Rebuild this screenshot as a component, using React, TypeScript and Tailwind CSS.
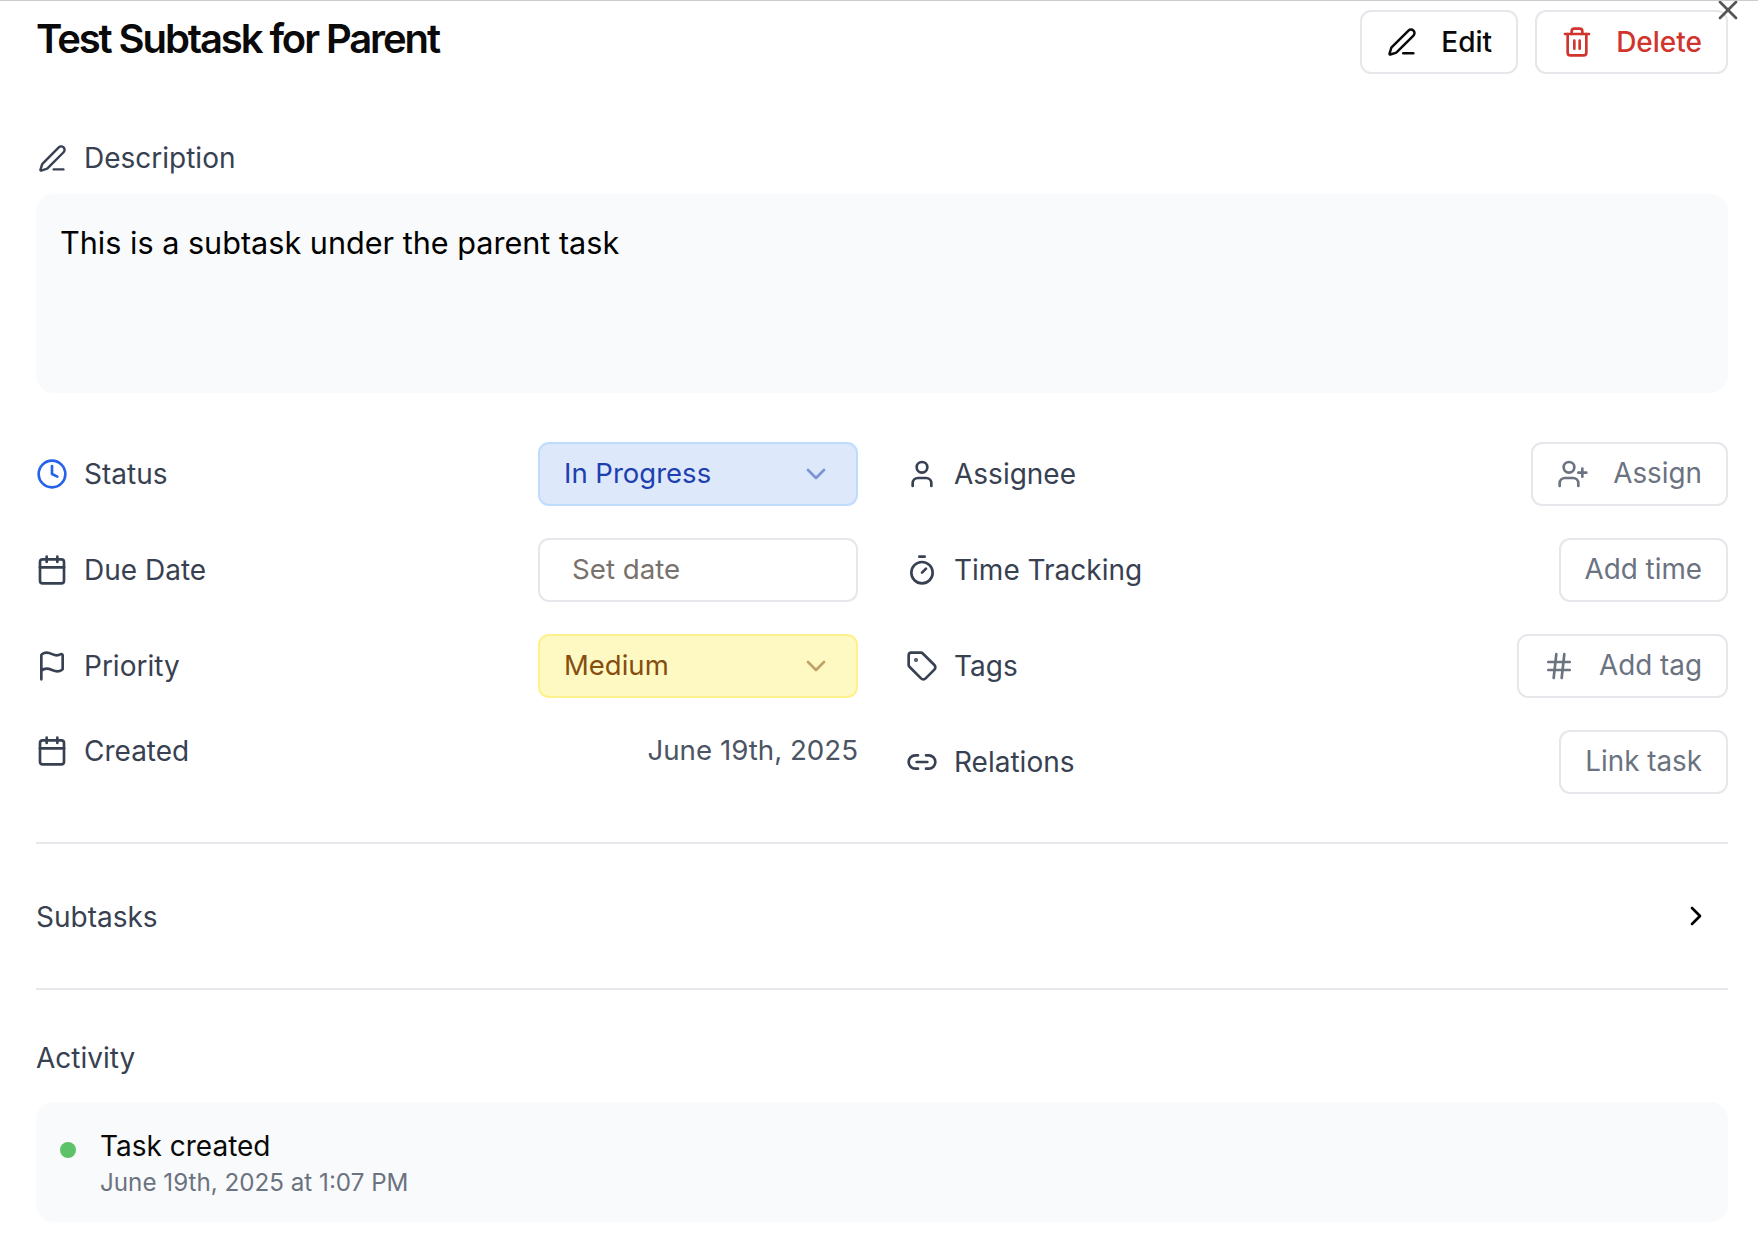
import {
  Calendar,
  ChevronDown,
  ChevronRight,
  Clock,
  Flag,
  Hash,
  Link2,
  PenLine,
  Tag,
  Timer,
  Trash2,
  User,
  UserPlus,
  X,
} from 'lucide-react';
import type { ReactNode } from 'react';

function Row({ icon, label, children }: { icon: ReactNode; label: string; children: ReactNode }) {
  return (
    <div className="flex items-center justify-between h-[64px]">
      <div className="flex items-center gap-[16px] text-[#374151]">
        {icon}
        <span className="text-[28px] leading-none font-normal">{label}</span>
      </div>
      {children}
    </div>
  );
}

function ActionButton({ icon, label }: { icon?: ReactNode; label: string }) {
  return (
    <button className="h-[64px] px-[24px] flex items-center gap-[24px] rounded-[11px] border-2 border-[#e5e7eb] bg-white text-[27.8px] font-normal text-[#6b7280]">
      {icon}
      {label}
    </button>
  );
}

function SelectBox({ label, className, chevron }: { label: string; className: string; chevron: string }) {
  return (
    <div className={`w-[320px] h-[64px] pl-[24px] pr-[24px] flex items-center justify-between rounded-[11px] border-2 text-[27.5px] font-normal ${className}`}>
      {label}
      <ChevronDown size={32} strokeWidth={2} className={chevron} />
    </div>
  );
}

const iconClass = 'shrink-0';

export default function App() {
  return (
    <div className="relative w-[1758px] h-[1256px] overflow-hidden bg-white border-t border-[#cccccc] pl-[36px] pr-[30px] font-['Inter',sans-serif] text-black">
      <X size={32} strokeWidth={2} className="absolute right-[14px] top-[-7px] text-[#555555]" />

      <div className="flex items-start justify-between pt-[9px]">
        <h1 className="text-[40px] leading-[58px] font-semibold tracking-[-2.1px] text-[#0a0a0a]">Test Subtask for Parent</h1>
        <div className="flex gap-[17px]">
          <button className="h-[64px] pl-[25px] pr-[24px] flex items-center gap-[24px] rounded-[11px] border-2 border-[#e5e7eb] text-[28px] font-medium text-[#0a0a0a]">
            <PenLine size={30} strokeWidth={2} />
            Edit
          </button>
          <button className="h-[64px] px-[24px] flex items-center gap-[23px] rounded-[11px] border-2 border-[#e5e7eb] text-[28px] font-medium text-[#d0342c]">
            <Trash2 size={32} strokeWidth={2} />
            Delete
          </button>
        </div>
      </div>

      <div className="mt-[64px] flex items-center gap-[16px] text-[#374151]">
        <span className="w-[32px] flex justify-center">
          <PenLine size={29} strokeWidth={2} />
        </span>
        <span className="text-[28px] leading-[40px] font-normal">Description</span>
      </div>
      <div className="mt-[16px] h-[199px] rounded-[18px] bg-[#f9fafb] px-[24px] pt-[28px] text-[30.6px] leading-[42px]">
        This is a subtask under the parent task
      </div>

      <div className="mt-[49px] grid grid-cols-2 gap-x-[48px]">
        <div className="flex flex-col">
          <Row icon={<Clock size={32} strokeWidth={2} className={`${iconClass} text-[#2563eb]`} />} label="Status">
            <SelectBox label="In Progress" className="bg-[#dde8fb] border-[#bfdbfe] text-[#1e40af]" chevron="text-[#1e40af] opacity-50" />
          </Row>
          <div className="mt-[32px]">
            <Row icon={<Calendar size={32} strokeWidth={2} className={iconClass} />} label="Due Date">
              <div className="w-[320px] h-[64px] pl-[32px] flex items-center rounded-[11px] border-2 border-[#e5e7eb] text-[27.7px] text-[#78716c]">Set date</div>
            </Row>
          </div>
          <div className="mt-[32px]">
            <Row icon={<Flag size={32} strokeWidth={2} className={iconClass} />} label="Priority">
              <SelectBox label="Medium" className="bg-[#fef9c3] border-[#fef08a] text-[#854d0e]" chevron="text-[#854d0e] opacity-50" />
            </Row>
          </div>
          <div className="mt-[33px] flex items-center justify-between h-[40px]">
            <div className="flex items-center gap-[16px] text-[#374151]">
              <Calendar size={32} strokeWidth={2} className={iconClass} />
              <span className="text-[28px] leading-none font-normal">Created</span>
            </div>
            <span className="text-[27.7px] text-[#4b5563]">June 19th, 2025</span>
          </div>
        </div>

        <div className="flex flex-col">
          <Row icon={<User size={32} strokeWidth={2} className={iconClass} />} label="Assignee">
            <ActionButton icon={<UserPlus size={32} strokeWidth={2} />} label="Assign" />
          </Row>
          <div className="mt-[32px]">
            <Row icon={<Timer size={32} strokeWidth={2} className={iconClass} />} label="Time Tracking">
              <ActionButton label="Add time" />
            </Row>
          </div>
          <div className="mt-[32px]">
            <Row icon={<Tag size={32} strokeWidth={2} className={iconClass} />} label="Tags">
              <ActionButton icon={<Hash size={32} strokeWidth={2} />} label="Add tag" />
            </Row>
          </div>
          <div className="mt-[32px]">
            <Row icon={<Link2 size={32} strokeWidth={2} className={iconClass} />} label="Relations">
              <ActionButton label="Link task" />
            </Row>
          </div>
        </div>
      </div>

      <div className="mt-[48px] border-t-2 border-[#e5e7eb] h-[146px] pt-[2px] flex items-center justify-between pr-[16px]">
        <span className="text-[28px] font-normal text-[#374151]">Subtasks</span>
        <ChevronRight size={32} strokeWidth={2} className="-mt-[2px]" />
      </div>
      <div className="border-t-2 border-[#e5e7eb] pt-[50px]">
        <div className="text-[28px] leading-[36px] font-normal text-[#374151]">Activity</div>
        <div className="mt-[26px] h-[120px] rounded-[18px] bg-[#f9fafb] px-[24px] pt-[26px] flex items-start gap-[24px]">
          <span className="mt-[14px] w-[16px] h-[16px] rounded-full bg-[#5ec269]" />
          <div className="flex flex-col">
            <span className="text-[28px] leading-[37px] font-normal text-[#0a0a0a]">Task created</span>
            <span className="text-[24.2px] leading-[36px] text-[#6b7280]">June 19th, 2025 at 1:07 PM</span>
          </div>
        </div>
      </div>
    </div>
  );
}
